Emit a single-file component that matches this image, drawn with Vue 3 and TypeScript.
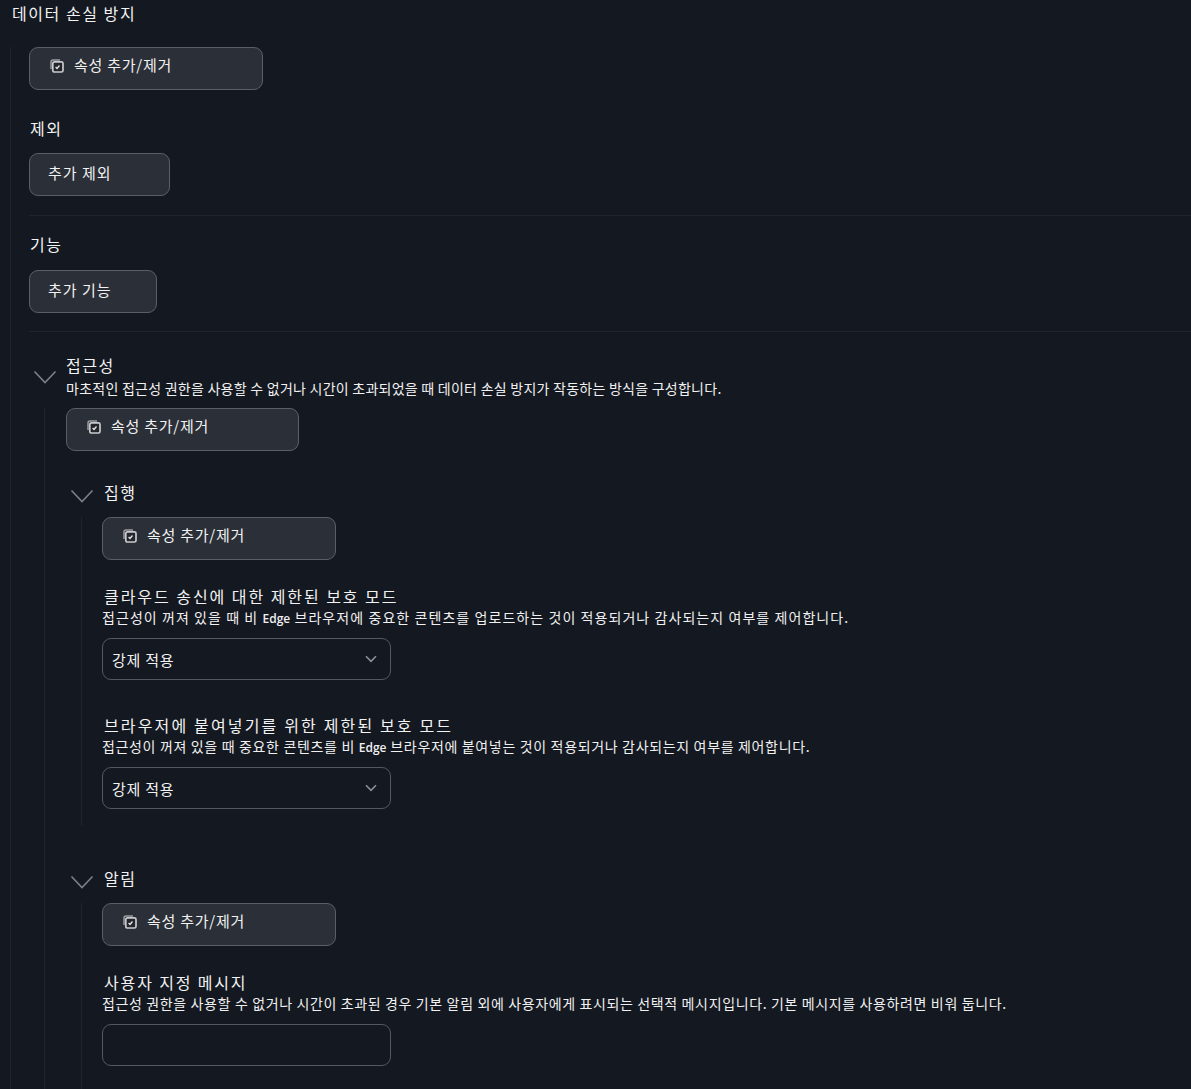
<script setup lang="ts">
const addRemove = '속성 추가/제거'
</script>

<template>
  <main class="page">
    <h1 class="title">데이터 손실 방지</h1>
    <div class="tree top">
      <button class="btn wide">
        <svg class="ico" viewBox="0 0 14 14" aria-hidden="true">
          <path d="M1 10V3a2 2 0 0 1 2-2h7" fill="none" stroke="#9a9da2" stroke-width="1.5" />
          <rect x="2.8" y="2.8" width="10.2" height="10.2" rx="1.6" fill="#23262c" stroke="#c9cacd" stroke-width="1.7" />
          <path d="M5.6 8l1.4 1.5 2.5-3" fill="none" stroke="#e8e8ea" stroke-width="1.3" />
        </svg>
        <span>{{ addRemove }}</span>
      </button>

      <div class="label l-exclude">제외</div>
      <button class="btn exclude">추가 제외</button>
      <hr class="rule" />

      <div class="label l-feature">기능</div>
      <button class="btn feature">추가 기능</button>
      <hr class="rule r2" />

      <section class="access">
        <header class="head">
          <svg class="chev" viewBox="0 0 24 14" aria-hidden="true"><path d="M1.5 1.5 12 12.5 22.5 1.5" /></svg>
          <div>
            <div class="label">접근성</div>
            <p class="desc d1">마초적인 접근성 권한을 사용할 수 없거나 시간이 초과되었을 때 데이터 손실 방지가 작동하는 방식을 구성합니다.</p>
          </div>
        </header>
        <div class="tree inner">
          <button class="btn wide narrow">
            <svg class="ico" viewBox="0 0 14 14" aria-hidden="true">
              <path d="M1 10V3a2 2 0 0 1 2-2h7" fill="none" stroke="#9a9da2" stroke-width="1.5" />
              <rect x="2.8" y="2.8" width="10.2" height="10.2" rx="1.6" fill="#23262c" stroke="#c9cacd" stroke-width="1.7" />
              <path d="M5.6 8l1.4 1.5 2.5-3" fill="none" stroke="#e8e8ea" stroke-width="1.3" />
            </svg>
            <span>{{ addRemove }}</span>
          </button>

          <section class="enforce">
            <header class="sub">
              <svg class="chev" viewBox="0 0 24 14" aria-hidden="true"><path d="M1.5 1.5 12 12.5 22.5 1.5" /></svg>
              <div class="label">집행</div>
            </header>
            <div class="tree leaf">
              <button class="btn wide">
                <svg class="ico" viewBox="0 0 14 14" aria-hidden="true">
                  <path d="M1 10V3a2 2 0 0 1 2-2h7" fill="none" stroke="#9a9da2" stroke-width="1.5" />
                  <rect x="2.8" y="2.8" width="10.2" height="10.2" rx="1.6" fill="#23262c" stroke="#c9cacd" stroke-width="1.7" />
                  <path d="M5.6 8l1.4 1.5 2.5-3" fill="none" stroke="#e8e8ea" stroke-width="1.3" />
                </svg>
                <span>{{ addRemove }}</span>
              </button>

              <div class="label field f1">클라우드 송신에 대한 제한된 보호 모드</div>
              <p class="desc d2">접근성이 꺼져 있을 때 비 <b>Edge</b> 브라우저에 중요한 콘텐츠를 업로드하는 것이 적용되거나 감사되는지 여부를 제어합니다.</p>
              <div class="select">
                <span>강제 적용</span>
                <svg class="caret" viewBox="0 0 12 8" aria-hidden="true"><path d="M1 1.2 6 6.4l5-5.2" /></svg>
              </div>

              <div class="label field f2">브라우저에 붙여넣기를 위한 제한된 보호 모드</div>
              <p class="desc d3">접근성이 꺼져 있을 때 중요한 콘텐츠를 비 <b>Edge</b> 브라우저에 붙여넣는 것이 적용되거나 감사되는지 여부를 제어합니다.</p>
              <div class="select">
                <span>강제 적용</span>
                <svg class="caret" viewBox="0 0 12 8" aria-hidden="true"><path d="M1 1.2 6 6.4l5-5.2" /></svg>
              </div>
            </div>
          </section>

          <section class="notify">
            <header class="sub">
              <svg class="chev" viewBox="0 0 24 14" aria-hidden="true"><path d="M1.5 1.5 12 12.5 22.5 1.5" /></svg>
              <div class="label">알림</div>
            </header>
            <div class="tree leaf open">
              <button class="btn wide">
                <svg class="ico" viewBox="0 0 14 14" aria-hidden="true">
                  <path d="M1 10V3a2 2 0 0 1 2-2h7" fill="none" stroke="#9a9da2" stroke-width="1.5" />
                  <rect x="2.8" y="2.8" width="10.2" height="10.2" rx="1.6" fill="#23262c" stroke="#c9cacd" stroke-width="1.7" />
                  <path d="M5.6 8l1.4 1.5 2.5-3" fill="none" stroke="#e8e8ea" stroke-width="1.3" />
                </svg>
                <span>{{ addRemove }}</span>
              </button>
              <div class="label field f3">사용자 지정 메시지</div>
              <p class="desc d4">접근성 권한을 사용할 수 없거나 시간이 초과된 경우 기본 알림 외에 사용자에게 표시되는 선택적 메시지입니다. 기본 메시지를 사용하려면 비워 둡니다.</p>
              <div class="select msg"></div>
            </div>
          </section>
        </div>
      </section>
    </div>
  </main>
</template>

<style>
html, body { margin: 0; background: #141820; }
</style>

<style scoped>
.page {
  box-sizing: border-box;
  width: 1191px;
  height: 1089px;
  overflow: hidden;
  background: #141820;
  color: #f2f2f2;
  font-family: "Noto Sans CJK KR", "Noto Sans", sans-serif;
}
.title {
  box-sizing: border-box;
  height: 47px;
  margin: 0;
  padding: 2px 0 0 12px;
  font-size: 16px;
  font-weight: 400;
  line-height: 22px;
  letter-spacing: 1.55px;
}
.tree { border-left: 1px solid #20242c; }
.top { margin-left: 10px; padding-left: 18px; }
.inner { margin-left: 15px; padding-left: 21px; }
.leaf { height: 309px; margin-left: 15px; padding-left: 20px; }
.leaf.open { height: 200px; }
.btn {
  display: flex;
  align-items: flex-start;
  gap: 10px;
  box-sizing: border-box;
  height: 43px;
  padding: 7px 18px 0;
  border: 1px solid #5a5e66;
  border-radius: 9px;
  background: #2b2f37;
  color: #f2f2f2;
  font: inherit;
  font-size: 15px;
  line-height: 20px;
  letter-spacing: 0.75px;
}
.wide { width: 234px; padding-left: 20px; }
.narrow { width: 233px; }
.exclude { width: 141px; padding-top: 9px; letter-spacing: 1px; }
.feature { width: 128px; padding-top: 9px; letter-spacing: 1px; }
.ico { width: 14px; height: 14px; margin-top: 4px; flex: none; }
.label {
  font-size: 16px;
  line-height: 22px;
  letter-spacing: 1.5px;
}
.l-exclude { margin: 27px 0 14px 1px; }
.l-feature { margin: 17px 0 15px 1px; }
.rule { height: 1px; margin: 19px 0 0; border: 0; background: #20242c; }
.r2 { margin-top: 18px; }
.desc {
  margin: 2px 0 0;
  font-size: 14px;
  line-height: 20px;
  white-space: nowrap;
  color: #f0f0f0;
}
.desc b { font-family: "Open Sans", sans-serif; font-size: 12px; font-weight: 600; letter-spacing: 0; }
.d1 { letter-spacing: 0.25px; }
.d2 { margin-top: 0; letter-spacing: 1.07px; }
.d3 { margin-top: 0; letter-spacing: 0.66px; }
.d4 { margin-top: 0; letter-spacing: 0.63px; }
.access { margin-top: 22px; }
.head { display: flex; gap: 9px; height: 54px; margin-top: 1px; }
.head > .chev { margin: 16px 0 0 4px; }
.chev {
  flex: none;
  width: 24px;
  height: 14px;
  fill: none;
  stroke: #7c8087;
  stroke-width: 1.6;
}
.enforce { margin-top: 29px; }
.notify { margin-top: 40px; }
.sub { display: flex; gap: 10px; height: 37px; margin-left: 4px; }
.sub > .chev { margin-top: 9px; }
.sub > .label { margin-top: 1px; }
.field { padding-left: 2px; }
.f1 { margin-top: 25px; letter-spacing: 1.95px; }
.f2 { margin-top: 34px; letter-spacing: 2.15px; }
.f3 { margin-top: 25px; letter-spacing: 1.85px; }
.select {
  display: flex;
  align-items: center;
  justify-content: space-between;
  box-sizing: border-box;
  width: 289px;
  height: 42px;
  margin-top: 9px;
  padding: 0 13px 0 9px;
  border: 1px solid #53575f;
  border-radius: 9px;
  font-size: 15px;
  letter-spacing: 0.75px;
}
.msg { margin-top: 11px; }
.caret { width: 12px; height: 8px; fill: none; stroke: #8d9096; stroke-width: 1.6; }
</style>
